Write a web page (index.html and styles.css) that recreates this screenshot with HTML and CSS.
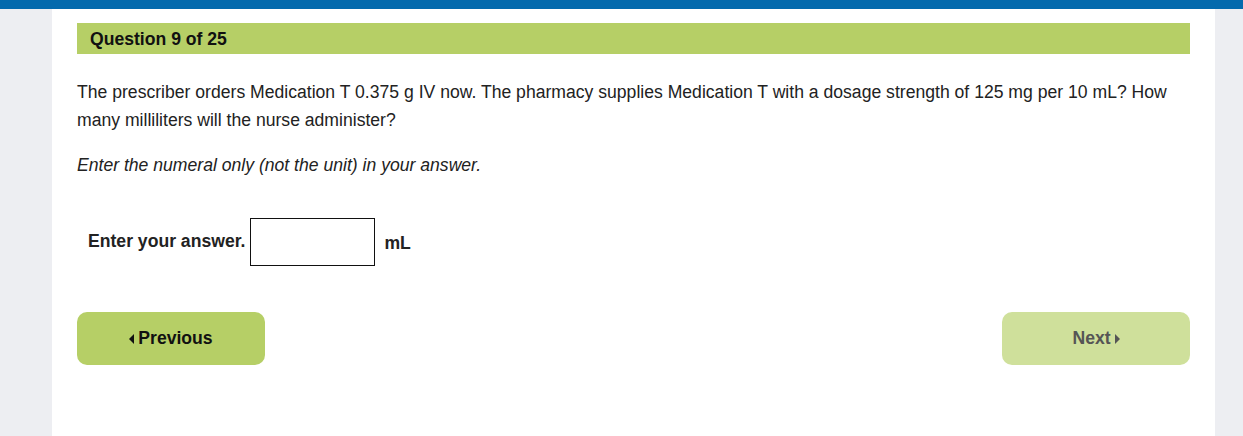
FILE: index.html
```html
<!DOCTYPE html>
<html>
<head>
<meta charset="utf-8">
<link rel="stylesheet" href="styles.css">
</head>
<body>
<div class="topbar"></div>
<div class="page">
  <main class="panel">
    <div class="qhead">Question 9 of 25</div>
    <p class="stem">The prescriber orders Medication T 0.375 g IV now. The pharmacy supplies Medication T with a dosage strength of 125 mg per 10 mL? How many milliliters will the nurse administer?</p>
    <p class="hint">Enter the numeral only (not the unit) in your answer.</p>
    <div class="answer">
      <label class="alabel" for="ans">Enter your answer.</label>
      <input id="ans" class="ainput" type="text">
      <span class="unit">mL</span>
    </div>
    <div class="nav">
      <button class="btn"><span class="tri tri-left"></span>Previous</button>
      <button class="btn btn-disabled">Next<span class="tri tri-right"></span></button>
    </div>
  </main>
</div>
</body>
</html>
```
FILE: styles.css
```css
html, body {
  margin: 0;
  padding: 0;
}
body {
  background: #edeef2;
  font-family: "Liberation Sans", Arial, sans-serif;
  color: #222;
  width: 1243px;
  height: 436px;
  overflow: hidden;
}
.topbar {
  height: 9px;
  background: #046aad;
}
.page {
  padding: 0 28px 0 52px;
}
.panel {
  background: #fff;
  height: 427px;
  padding: 14px 25px 0 25px;
  box-sizing: border-box;
}
.qhead {
  background: #b6cf66;
  height: 31px;
  line-height: 31px;
  padding: 1px 0 0 13px;
  box-sizing: border-box;
  font-weight: bold;
  font-size: 17.6px;
  color: #111;
}
.stem {
  margin: 24px 0 0 0;
  font-size: 17.6px;
  line-height: 28px;
  padding-right: 20px;
}
.hint {
  margin: 17px 0 0 0;
  font-size: 17.6px;
  line-height: 28px;
  font-style: italic;
}
.answer {
  display: flex;
  align-items: center;
  margin-top: 39px;
  padding-left: 11px;
}
.alabel {
  font-weight: bold;
  font-size: 17.6px;
  margin-right: 5px;
  padding-bottom: 2px;
}
.ainput {
  width: 125px;
  height: 48px;
  box-sizing: border-box;
  border: 1px solid #111;
  border-radius: 0;
  margin: 0;
  padding: 0 6px;
  font-size: 16px;
}
.unit {
  font-weight: bold;
  font-size: 17.6px;
  margin-left: 9px;
  padding-top: 2px;
}
.nav {
  display: flex;
  justify-content: space-between;
  margin-top: 46px;
}
.btn {
  width: 188px;
  height: 53px;
  border: none;
  border-radius: 10px;
  background: #b6cf66;
  font-family: "Liberation Sans", Arial, sans-serif;
  font-weight: bold;
  font-size: 17.6px;
  color: #111;
  display: flex;
  align-items: center;
  justify-content: center;
  padding: 0;
}
.btn-disabled {
  background: #cfe09b;
  color: #555;
}
.tri {
  display: inline-block;
  width: 0;
  height: 0;
  border-top: 5px solid transparent;
  border-bottom: 5px solid transparent;
}
.tri-left {
  border-right: 5px solid #111;
  margin-right: 4px;
}
.tri-right {
  border-left: 5px solid #555;
  margin-left: 4px;
}
```
